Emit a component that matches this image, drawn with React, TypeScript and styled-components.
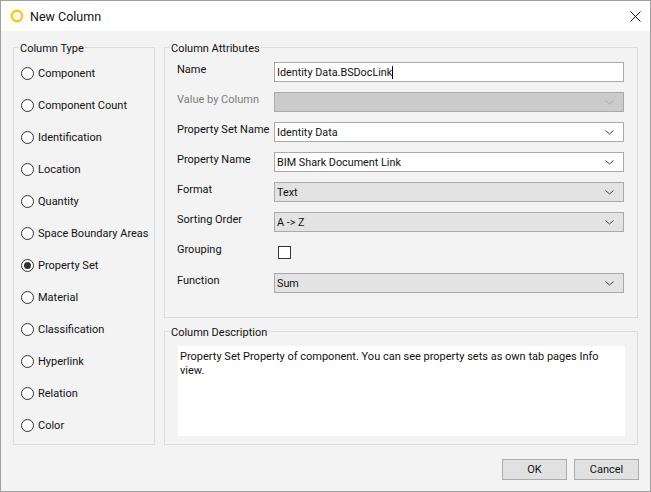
import React from "react";
import styled, { createGlobalStyle } from "styled-components";

const Global = createGlobalStyle`
  html, body { margin: 0; padding: 0; background: #f3f3f3; }
  * { box-sizing: border-box; }
`;

const Window = styled.div`
  width: 651px;
  height: 492px;
  display: flex;
  flex-direction: column;
  background: #f3f3f3;
  border: 1px solid #a0a0a0;
  font-family: Roboto, "Noto Sans", sans-serif;
  font-size: 11px;
  color: #000;
  overflow: hidden;
`;

const TitleBar = styled.header`
  height: 30px;
  flex: none;
  background: #fff;
  display: flex;
  align-items: center;
  padding: 0 9px 0 9px;
  gap: 6px;
`;

const TitleText = styled.div`
  flex: 1;
  font-size: 12.5px;
  color: #111;
`;

const Body = styled.div`
  flex: 1;
  display: flex;
  gap: 9px;
  padding: 8px 13px 0 12px;
`;

const Group = styled.fieldset<{ $h: number }>`
  margin: 0;
  padding: 0;
  min-width: 0;
  height: ${(p) => p.$h}px;
  border: 1px solid #dcdcdc;
  display: block;
`;

const Legend = styled.legend`
  margin-left: 5px;
  padding: 2px 1px 0;
  font-size: 11px;
  line-height: 15px;
  color: #111;
`;

const TypeGroup = styled(Group)`
  width: 142px;
  flex: none;
`;

const RadioList = styled.div`
  display: flex;
  flex-direction: column;
  gap: 14px;
  padding: 8px 0 0 7px;
`;

const RadioRow = styled.label`
  display: flex;
  align-items: center;
  gap: 4px;
  height: 18px;
`;

const RadioMark = styled.span<{ $on?: boolean }>`
  width: 13px;
  height: 13px;
  flex: none;
  border-radius: 50%;
  border: 1px solid #333;
  background: #fff;
  display: flex;
  align-items: center;
  justify-content: center;
  &::after {
    content: "";
    width: 7px;
    height: 7px;
    border-radius: 50%;
    background: ${(p) => (p.$on ? "#333" : "transparent")};
  }
`;

const RadioText = styled.span`
  font-size: 11px;
  color: #111;
`;

const RightColumn = styled.div`
  width: 474px;
  flex: none;
  display: flex;
  flex-direction: column;
  gap: 5px;
`;

const Rows = styled.div`
  display: flex;
  flex-direction: column;
  padding: 6px 12px 0 12px;
`;

const Row = styled.div<{ $gap?: number }>`
  display: grid;
  grid-template-columns: 97px 350px;
  height: 20px;
  margin-bottom: ${(p) => p.$gap ?? 10}px;
`;

const RowLabel = styled.div<{ $off?: boolean }>`
  margin-top: -2px;
  line-height: 20px;
  font-size: 11px;
  white-space: nowrap;
  color: ${(p) => (p.$off ? "#7d7d7d" : "#111")};
`;

const Field = styled.div<{ $tone: "white" | "grey" | "off" }>`
  height: 20px;
  border: 1px solid #a9a9a9;
  background: ${(p) => (p.$tone === "white" ? "#fff" : p.$tone === "grey" ? "#e3e3e3" : "#cbcbcb")};
  display: flex;
  align-items: center;
  justify-content: space-between;
  padding: 0 9px 0 2px;
  font-size: 10.8px;
  color: #111;
`;

const TextField = styled(Field)`
  justify-content: flex-start;
`;

const Caret = styled.span`
  display: inline-block;
  width: 1px;
  height: 13px;
  background: #000;
`;

const CheckWrap = styled.div`
  padding: 4px 0 0 4px;
`;

const Check = styled.span`
  display: block;
  width: 13px;
  height: 13px;
  border: 1px solid #333;
  background: #fff;
`;

const DescBox = styled.div`
  margin: 6px 12px 0 13px;
  height: 90px;
  background: #fff;
  padding: 4px 2px;
  font-size: 11px;
  line-height: 14px;
  color: #111;
`;

const Footer = styled.footer`
  height: 46px;
  flex: none;
  display: flex;
  justify-content: flex-end;
  gap: 7px;
  padding: 14px 11px 0 0;
`;

const Button = styled.button`
  width: 65px;
  height: 21px;
  padding: 0;
  border: 1px solid #ababab;
  background: #e1e1e1;
  font-family: inherit;
  font-size: 11px;
  color: #111;
`;

const Chevron = ({ color = "#444" }: { color?: string }) => (
  <svg width="9" height="5" viewBox="0 0 9 5" fill="none">
    <path d="M0.5 0.5 L4.5 4 L8.5 0.5" stroke={color} strokeWidth="1" />
  </svg>
);

const types = [
  "Component",
  "Component Count",
  "Identification",
  "Location",
  "Quantity",
  "Space Boundary Areas",
  "Property Set",
  "Material",
  "Classification",
  "Hyperlink",
  "Relation",
  "Color",
];

export default function App() {
  return (
    <Window>
      <Global />
      <TitleBar>
        <svg width="14" height="14" viewBox="0 0 14 14" fill="none">
          <circle cx="7" cy="7" r="5.2" stroke="#fdc60f" strokeWidth="2.4" />
        </svg>
        <TitleText>New Column</TitleText>
        <svg width="11" height="11" viewBox="0 0 11 11" fill="none">
          <path d="M0.5 0.5 L10.5 10.5 M10.5 0.5 L0.5 10.5" stroke="#111" strokeWidth="1" />
        </svg>
      </TitleBar>
      <Body>
        <TypeGroup $h={406}>
          <Legend>Column Type</Legend>
          <RadioList>
            {types.map((t) => (
              <RadioRow key={t}>
                <RadioMark $on={t === "Property Set"} />
                <RadioText>{t}</RadioText>
              </RadioRow>
            ))}
          </RadioList>
        </TypeGroup>
        <RightColumn>
          <Group $h={279}>
            <Legend>Column Attributes</Legend>
            <Rows>
              <Row>
                <RowLabel>Name</RowLabel>
                <TextField $tone="white">
                  Identity Data.BSDocLink<Caret />
                </TextField>
              </Row>
              <Row>
                <RowLabel $off>Value by Column</RowLabel>
                <Field $tone="off">
                  <span />
                  <Chevron color="#a8a8a8" />
                </Field>
              </Row>
              <Row>
                <RowLabel>Property Set Name</RowLabel>
                <Field $tone="white">
                  Identity Data
                  <Chevron />
                </Field>
              </Row>
              <Row>
                <RowLabel>Property Name</RowLabel>
                <Field $tone="white">
                  BIM Shark Document Link
                  <Chevron />
                </Field>
              </Row>
              <Row>
                <RowLabel>Format</RowLabel>
                <Field $tone="grey">
                  Text
                  <Chevron />
                </Field>
              </Row>
              <Row>
                <RowLabel>Sorting Order</RowLabel>
                <Field $tone="grey">
                  A -&gt; Z
                  <Chevron />
                </Field>
              </Row>
              <Row $gap={11}>
                <RowLabel>Grouping</RowLabel>
                <CheckWrap>
                  <Check />
                </CheckWrap>
              </Row>
              <Row>
                <RowLabel>Function</RowLabel>
                <Field $tone="grey">
                  Sum
                  <Chevron />
                </Field>
              </Row>
            </Rows>
          </Group>
          <Group $h={122}>
            <Legend>Column Description</Legend>
            <DescBox>
              Property Set Property of component. You can see property sets as own tab pages Info view.
            </DescBox>
          </Group>
        </RightColumn>
      </Body>
      <Footer>
        <Button>OK</Button>
        <Button>Cancel</Button>
      </Footer>
    </Window>
  );
}
